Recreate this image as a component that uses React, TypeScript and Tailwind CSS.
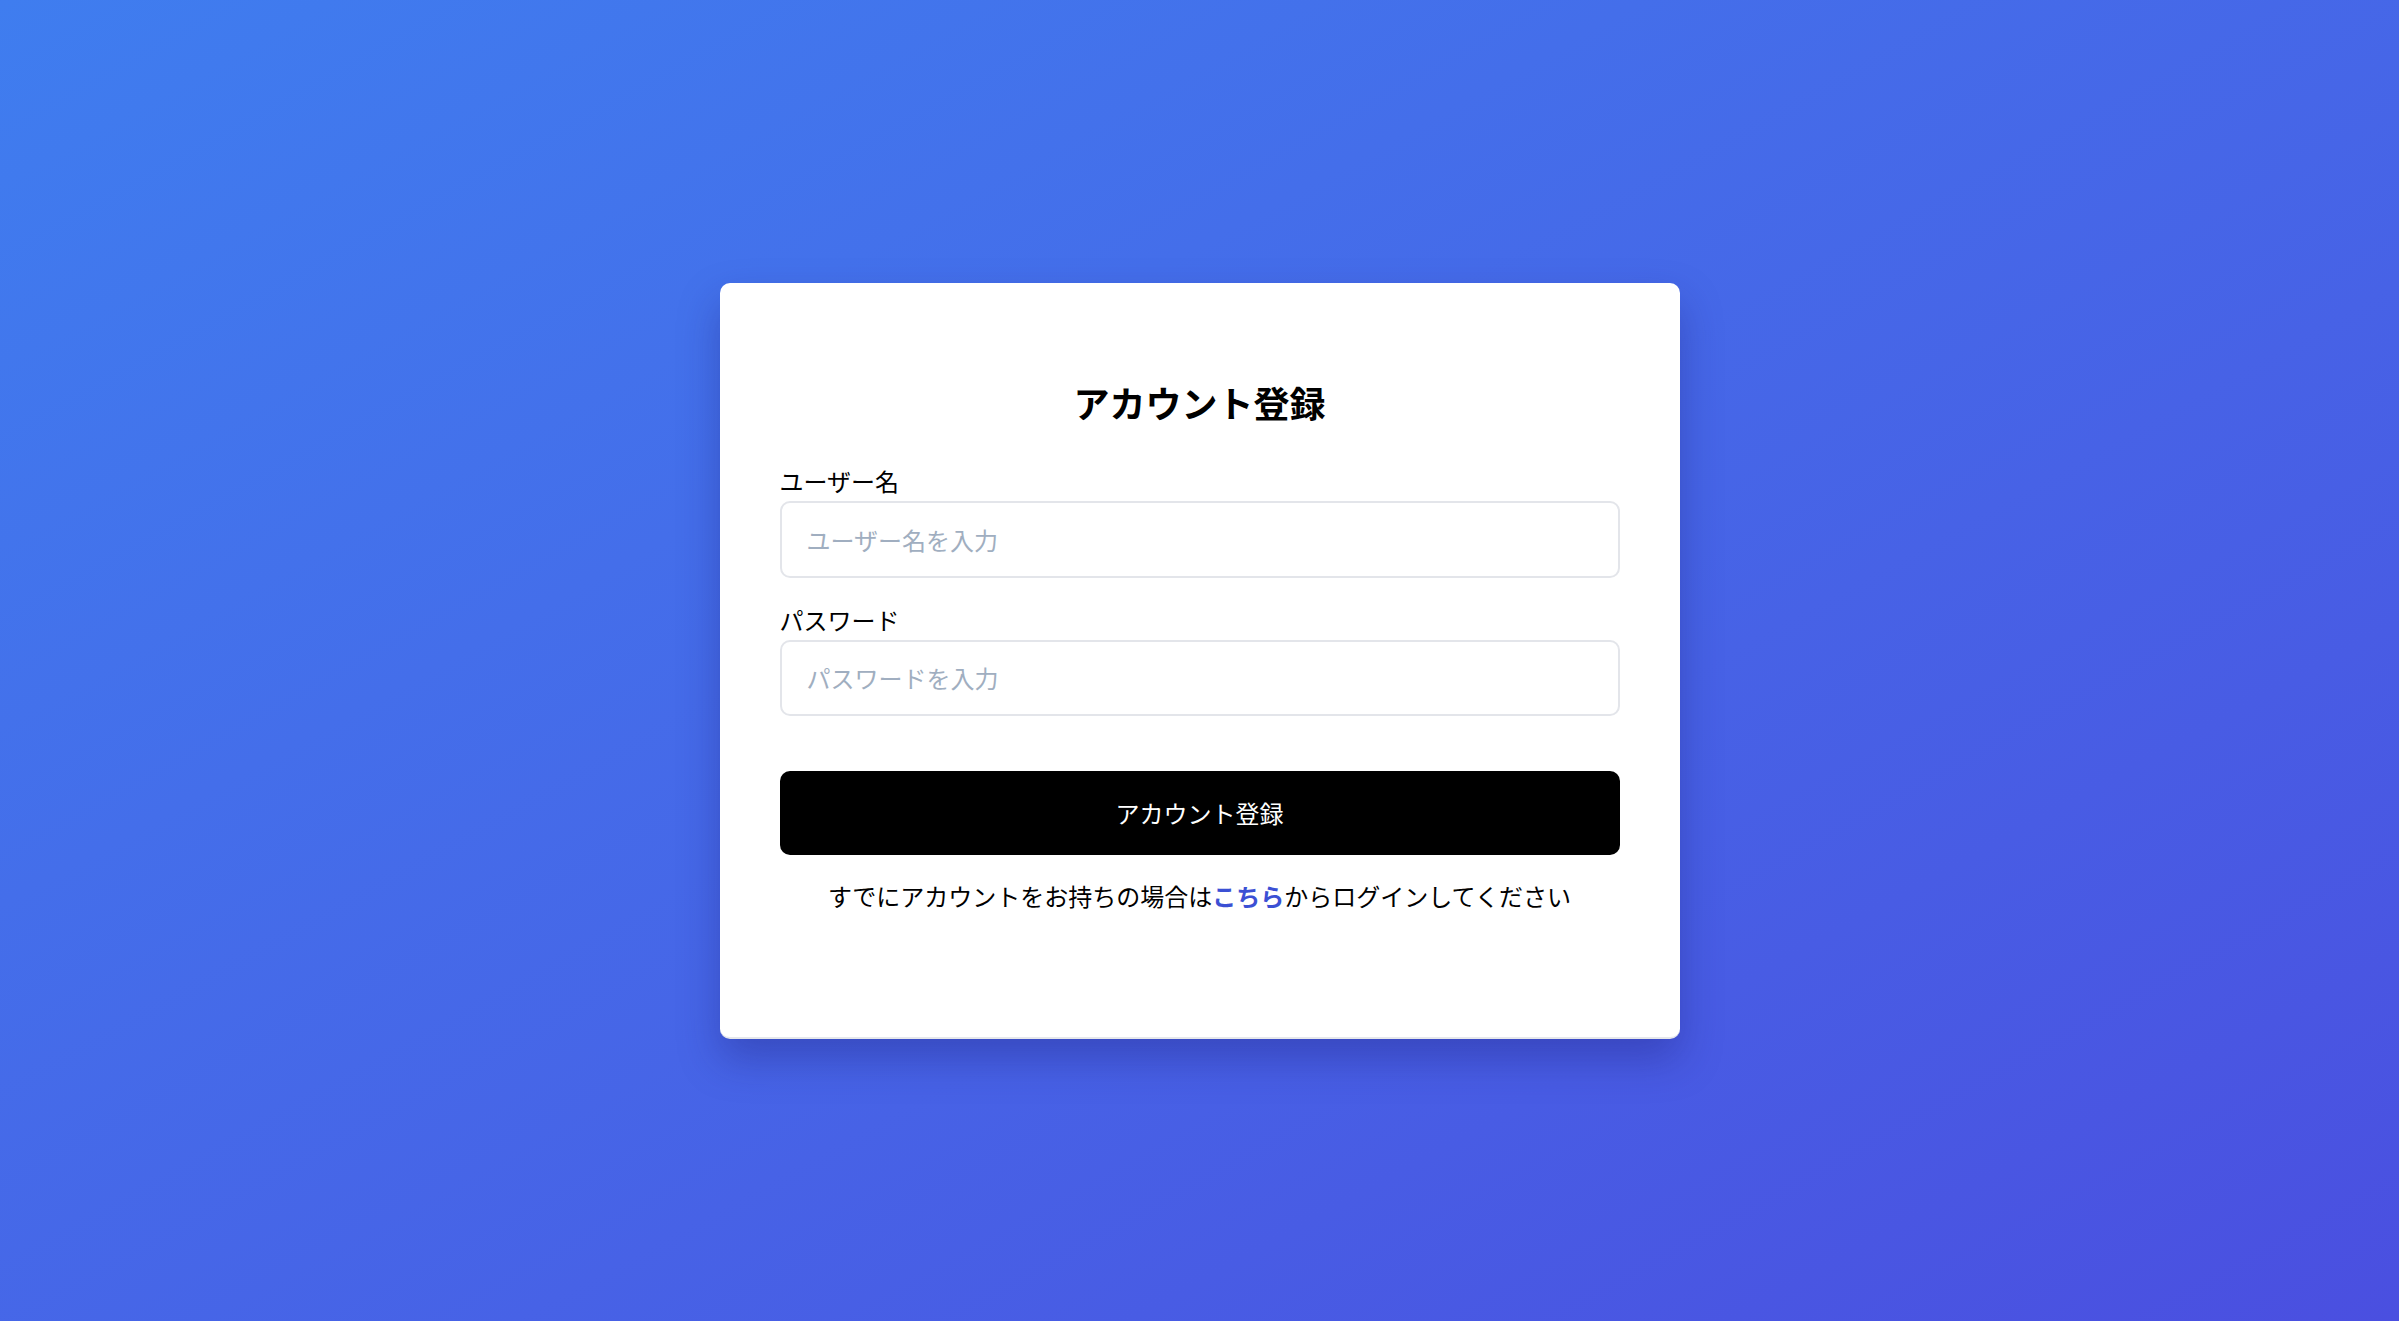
export default function App() {
  return (
    <div
      className="min-h-screen w-full flex items-center justify-center bg-gradient-to-br from-[#3f7def] to-[#4a4fe0]"
      style={{ fontFamily: '"Noto Sans CJK JP", "Noto Sans", sans-serif' }}
    >
      <div className="w-[960px] bg-white rounded-[10px] border-b-2 border-gray-200 shadow-[0_20px_40px_rgba(30,30,120,0.35)] px-[60px] pt-[101px] pb-[129px]">
        <h1 className="text-[36px] leading-[36px] font-bold text-black text-center">アカウント登録</h1>

        <form className="mt-[49px]" onSubmit={(e) => e.preventDefault()}>
          <label className="block text-[24px] leading-[24px] text-black mb-[8px]">ユーザー名</label>
          <input
            type="text"
            placeholder="ユーザー名を入力"
            className="w-full h-[77px] px-[25px] text-[24px] border-2 border-[#e3e5ea] rounded-[10px] outline-none placeholder:text-[#a0aec0]"
          />

          <label className="block text-[24px] leading-[24px] text-black mt-[30px] mb-[8px]">パスワード</label>
          <input
            type="password"
            placeholder="パスワードを入力"
            className="w-full h-[76px] px-[25px] text-[24px] border-2 border-[#e3e5ea] rounded-[10px] outline-none placeholder:text-[#a0aec0]"
          />

          <button
            type="submit"
            className="mt-[55px] w-full h-[84px] bg-black text-white text-[24px] rounded-[10px]"
          >
            アカウント登録
          </button>
        </form>

        <p className="mt-[29px] text-[24px] leading-[24px] text-center text-black">
          すでにアカウントをお持ちの場合は
          <a href="#" className="font-bold text-[#3b50d4]">こちら</a>
          からログインしてください
        </p>
      </div>
    </div>
  );
}
